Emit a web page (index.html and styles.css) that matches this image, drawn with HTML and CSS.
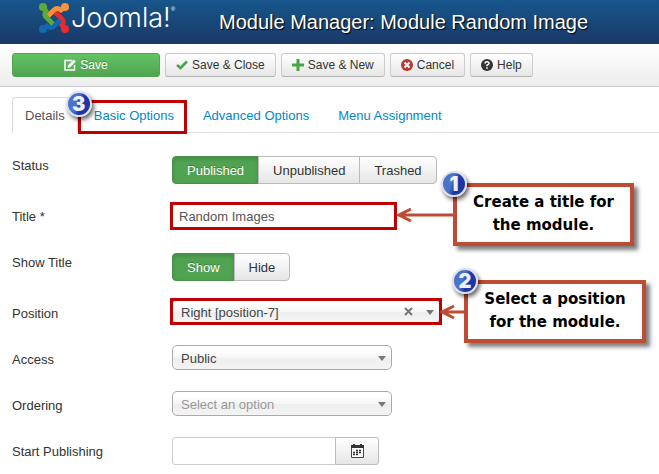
FILE: index.html
```
<!DOCTYPE html>
<html lang="en">
<head>
    <meta charset="UTF-8">
    <meta name="viewport" content="width=device-width, initial-scale=1.0">
    <title>Module Manager: Module Random Image</title>
    <link rel="stylesheet" href="styles.css">
</head>
<body>
    <header class="header">
        <a class="logo" href="#">
            <svg class="logo-mark" viewBox="0 0 30 30" fill="none" stroke-width="4.800">
                <path stroke="#e62a2e" d="M26 26L23 22Q26 18 22 15L16 9"/>
                <path stroke="#1269b0" d="M4 26L8 23Q12 26 15 23L21 17"/>
                <path stroke="#f9923a" d="M26 4L22 7Q18 4 15 7L9 13"/>
                <path stroke="#5da93c" d="M4 4L7 8Q4 12 8 15L14 21"/>
                <circle cx="4" cy="4" r="4" fill="#5da93c"/>
                <circle cx="26" cy="4" r="4" fill="#f9923a"/>
                <circle cx="26" cy="26" r="4" fill="#e62a2e"/>
                <circle cx="4" cy="26" r="4" fill="#1269b0"/>
            </svg>
            <span class="logo-text">Joomla!</span><span class="logo-reg">®</span>
        </a>
        <h1 class="page-title">Module Manager: Module Random Image</h1>
    </header>

    <!-- Toolbar -->
    <div class="toolbar">
        <button type="button" class="btn btn-save">
            <svg class="icon" viewBox="0 0 12 12" fill="none" stroke="#fff" stroke-width="1.500"><path d="M8 1.500H1V11H10.500V6"/><path d="M3.500 9 L4.200 6.200 L9.500 0.500 L11.800 2.500 L6.300 8.200 Z" fill="#fff" stroke="none"/></svg>
            Save
        </button>
        <button type="button" class="btn">
            <svg class="icon" viewBox="0 0 12 12" fill="none" stroke="#46a546" stroke-width="2.500"><path d="M1 6 L4.500 9 L11 2.500"/></svg>
            Save &amp; Close
        </button>
        <button type="button" class="btn">
            <svg class="icon" viewBox="0 0 12 12" fill="none" stroke="#46a546" stroke-width="3"><path d="M6 0V12M0 6H12"/></svg>
            Save &amp; New
        </button>
        <button type="button" class="btn">
            <svg class="icon" viewBox="0 0 12 12"><circle cx="6" cy="6" r="6" fill="#bd362f"/><path d="M3.500 3.500L8.500 8.500M8.500 3.500L3.500 8.500" stroke="#fff" stroke-width="2"/></svg>
            Cancel
        </button>
        <button type="button" class="btn">
            <svg class="icon" viewBox="0 0 12 12"><circle cx="6" cy="6" r="6" fill="#333"/><path d="M4 4.500Q4 2.700 6 2.700T8 4.500Q8 5.400 6 6.300V7.300M6 8.200V9.800" stroke="#fff" stroke-width="1.500" fill="none"/></svg>
            Help
        </button>
    </div>

    <main class="content">
        <nav class="tabs">
            <a class="tab active" href="#">Details</a>
            <a class="tab marked" href="#">Basic Options<span class="badge badge-tab">3</span></a>
            <a class="tab" href="#">Advanced Options</a>
            <a class="tab" href="#">Menu Assignment</a>
        </nav>

        <form class="form">
            <div class="row row-toggle">
                <span class="label" id="status-label">Status</span>
                <div class="btn-group" role="radiogroup" aria-labelledby="status-label">
                    <label class="toggle"><input type="radio" name="status" checked>Published</label>
                    <label class="toggle"><input type="radio" name="status">Unpublished</label>
                    <label class="toggle"><input type="radio" name="status">Trashed</label>
                </div>
            </div>

            <div class="row row-title">
                <label class="label" for="title">Title *</label>
                <div class="control control-title marked">
                    <input class="text-input" type="text" id="title" value="Random Images">
                    <div class="callout callout-title">
                        <span class="badge">1</span>
                        <svg class="arrow" width="60" height="16" viewBox="0 0 60 16"><path d="M2 8H60M14 2L2 8L14 14"/></svg>
                        Create a title for<br>the module.
                    </div>
                </div>
            </div>

            <div class="row row-toggle">
                <span class="label" id="show-label">Show Title</span>
                <div class="btn-group" role="radiogroup" aria-labelledby="show-label">
                    <label class="toggle"><input type="radio" name="show" checked>Show</label>
                    <label class="toggle"><input type="radio" name="show">Hide</label>
                </div>
            </div>

            <div class="row">
                <label class="label" for="position">Position</label>
                <div class="control control-position marked">
                    <select class="select" id="position"><option>Right [position-7]</option></select>
                    <button type="button" class="clear" aria-label="Clear">
                        <svg width="9" height="9" viewBox="0 0 9 9" stroke="#777" stroke-width="2"><path d="M1 1L8 8M8 1L1 8"/></svg>
                    </button>
                    <div class="callout callout-position">
                        <span class="badge">2</span>
                        <svg class="arrow" width="28" height="16" viewBox="0 0 28 16"><path d="M2 8H28M14 2L2 8L14 14"/></svg>
                        Select a position<br>for the module.
                    </div>
                </div>
            </div>

            <div class="row">
                <label class="label" for="access">Access</label>
                <div class="control">
                    <select class="select" id="access"><option>Public</option></select>
                </div>
            </div>

            <div class="row">
                <label class="label" for="ordering">Ordering</label>
                <div class="control">
                    <select class="select placeholder" id="ordering"><option>Select an option</option></select>
                </div>
            </div>

            <div class="row">
                <label class="label" for="publish-up">Start Publishing</label>
                <div class="date-group">
                    <input class="text-input date-input" type="text" id="publish-up">
                    <button type="button" class="date-btn" aria-label="Open calendar">
                        <svg width="13" height="14" viewBox="0 0 13 14"><path d="M0.500 1V13.500H12.500V1" fill="#fff" stroke="#444"/><path d="M0 1H2V0H4V1H9V0H11V1H13V4H0Z" fill="#333"/><path d="M5 6.500H11M2 8.500H11M2 10.500H8" stroke="#333" stroke-width="1.400" stroke-dasharray="2 1"/></svg>
                    </button>
                </div>
            </div>
        </form>
    </main>
</body>
</html>
```
FILE: styles.css
```
* {
    box-sizing: border-box;
}

body {
    margin: 0;
    font-family: "Liberation Sans", Arial, sans-serif;
    font-size: 13px;
    line-height: 18px;
    color: #333;
    background: #fff;
}

button,
input,
select {
    font: inherit;
    color: inherit;
}

/* Header */
.header {
    display: flex;
    align-items: center;
    height: 44px;
    padding-left: 39px;
    background: linear-gradient(#17568c, #1a3867);
    color: #fff;
}

.logo {
    display: flex;
    align-items: center;
    width: 180px;
    height: 36px;
    margin-bottom: 8px;
    color: #fff;
    text-decoration: none;
}

.logo-mark {
    width: 30px;
    height: 30px;
    margin-right: 2px;
}

.logo-text {
    font-family: Inter, sans-serif;
    font-weight: 300;
    font-size: 27px;
    line-height: 36px;
}

.logo-reg {
    align-self: flex-start;
    font-size: 6px;
}

.page-title {
    margin: 0;
    font-size: 20px;
    font-weight: normal;
    line-height: 24px;
    text-shadow: 1px 1px 1px #000;
    white-space: nowrap;
}

/* Toolbar */
.toolbar {
    display: flex;
    gap: 5px;
    padding: 9px 12px;
    background: linear-gradient(#fff, #ededed);
    border-bottom: 1px solid #ccc;
}

.btn {
    display: flex;
    align-items: center;
    justify-content: center;
    gap: 4px;
    height: 24px;
    padding: 0 10px;
    font-size: 12px;
    background: linear-gradient(#fff, #e6e6e6);
    border: 1px solid #ccc;
    border-bottom-color: #b3b3b3;
    border-radius: 3px;
    white-space: nowrap;
}

.btn-save {
    width: 148px;
    color: #fff;
    background: linear-gradient(#62c462, #51a351);
    border-color: #51a351;
    text-shadow: 0 -1px 0 rgba(0, 0, 0, 0.25);
}

.icon {
    width: 12px;
    height: 12px;
}

/* Tabs */
.content {
    padding: 10px 0 9px 12px;
}

.tabs {
    display: flex;
    gap: 3px;
    border-bottom: 1px solid #ddd;
}

.tab {
    position: relative;
    padding: 9px 12px 7px;
    border: 1px solid transparent;
    border-bottom: none;
    border-radius: 4px 4px 0 0;
    color: #08c;
    text-decoration: none;
    white-space: nowrap;
}

.tab.active {
    margin-bottom: -1px;
    color: #555;
    background: #fff;
    border-color: #ddd;
}

/* Red frames */
.marked::after {
    content: "";
    position: absolute;
    border: 3px solid #c00000;
    pointer-events: none;
}

.tab.marked::after {
    inset: 2px -1px -2px -4px;
}

.control-title.marked::after {
    inset: 0 -2px;
}

.control-position.marked::after {
    inset: -1px -2px;
}

/* Form */
.form {
    display: flex;
    flex-direction: column;
    gap: 18px;
    padding-top: 23px;
}

.row {
    display: grid;
    grid-template-columns: 160px 1fr;
    align-items: start;
    min-height: 28px;
}

.row-title {
    margin-bottom: 5px;
}

.label {
    padding-top: 6px;
}

.row-toggle .label {
    padding-top: 1px;
}

.control {
    position: relative;
    width: 220px;
}

.control-title {
    width: 223px;
}

.control-position {
    width: 268px;
}

.text-input {
    display: block;
    width: 100%;
    height: 28px;
    padding: 4px 6px;
    color: #555;
    background: #fff;
    border: 1px solid #ccc;
    border-radius: 3px;
}

.btn-group {
    display: flex;
}

.toggle {
    position: relative;
    height: 28px;
    padding: 5px 14px 4px;
    background: linear-gradient(#fff, #e6e6e6);
    border: 1px solid #bbb;
}

.toggle + .toggle {
    margin-left: -1px;
}

.toggle:first-child {
    border-radius: 4px 0 0 4px;
}

.toggle:last-child {
    border-radius: 0 4px 4px 0;
}

.toggle input {
    position: absolute;
    margin: 0;
    opacity: 0;
}

.toggle:has(input:checked) {
    color: #fff;
    background: #51a351;
    border-color: #499249;
    box-shadow: inset 0 2px 4px rgba(0, 0, 0, 0.15);
    text-shadow: 0 -1px 0 rgba(0, 0, 0, 0.25);
}

.select {
    display: block;
    width: 100%;
    height: 25px;
    padding: 2px 8px 0;
    color: #444;
    background: linear-gradient(#fff 20%, #f6f6f6 50%, #eee 52%, #f4f4f4);
    border: 1px solid #aaa;
    border-radius: 5px;
    appearance: none;
}

.select.placeholder {
    color: #999;
}

/* Drop-down triangle */
.control:has(.select)::before {
    content: "";
    position: absolute;
    top: 11px;
    right: 6px;
    border: 4px solid transparent;
    border-top: 5px solid #777;
    border-bottom: none;
}

.clear {
    position: absolute;
    top: 8px;
    right: 27px;
    display: flex;
    padding: 0;
    background: none;
    border: none;
}

.date-group {
    display: flex;
}

.date-input {
    width: 164px;
    border-radius: 3px 0 0 3px;
}

.date-btn {
    display: flex;
    align-items: center;
    justify-content: center;
    width: 44px;
    height: 28px;
    margin-left: -1px;
    padding: 0;
    background: linear-gradient(#fff, #e6e6e6);
    border: 1px solid #bbb;
    border-radius: 0 3px 3px 0;
}

/* Callouts */
.callout {
    position: absolute;
    top: -19px;
    padding: 4px 0 5px;
    font-family: "Arial Black", "DejaVu Sans", sans-serif;
    font-size: 15px;
    font-weight: bold;
    line-height: 23px;
    text-align: center;
    white-space: nowrap;
    color: #000;
    background: #fff;
    border: 4px solid #be4b33;
    box-shadow: 4px 4px 4px rgba(0, 0, 0, 0.5);
}

.callout-title {
    left: 281px;
    width: 181px;
}

.callout-position {
    left: 292px;
    width: 182px;
}

.arrow {
    position: absolute;
    top: 20px;
    right: 100%;
    z-index: 1;
    fill: none;
    stroke: #be4b33;
    stroke-width: 3;
}

.badge {
    position: absolute;
    top: -16px;
    left: -16px;
    z-index: 2;
    width: 26px;
    height: 26px;
    font-family: Inter, sans-serif;
    font-size: 20px;
    font-weight: 900;
    line-height: 22px;
    text-align: center;
    color: #eee;
    background: linear-gradient(110deg, #4a74c9 40%, #1b37a5 60%);
    border: 2px solid #dde;
    border-radius: 50%;
    box-shadow: 2px 3px 4px rgba(0, 0, 0, 0.6);
}

.badge-tab {
    top: -7px;
    left: -16px;
}
```
